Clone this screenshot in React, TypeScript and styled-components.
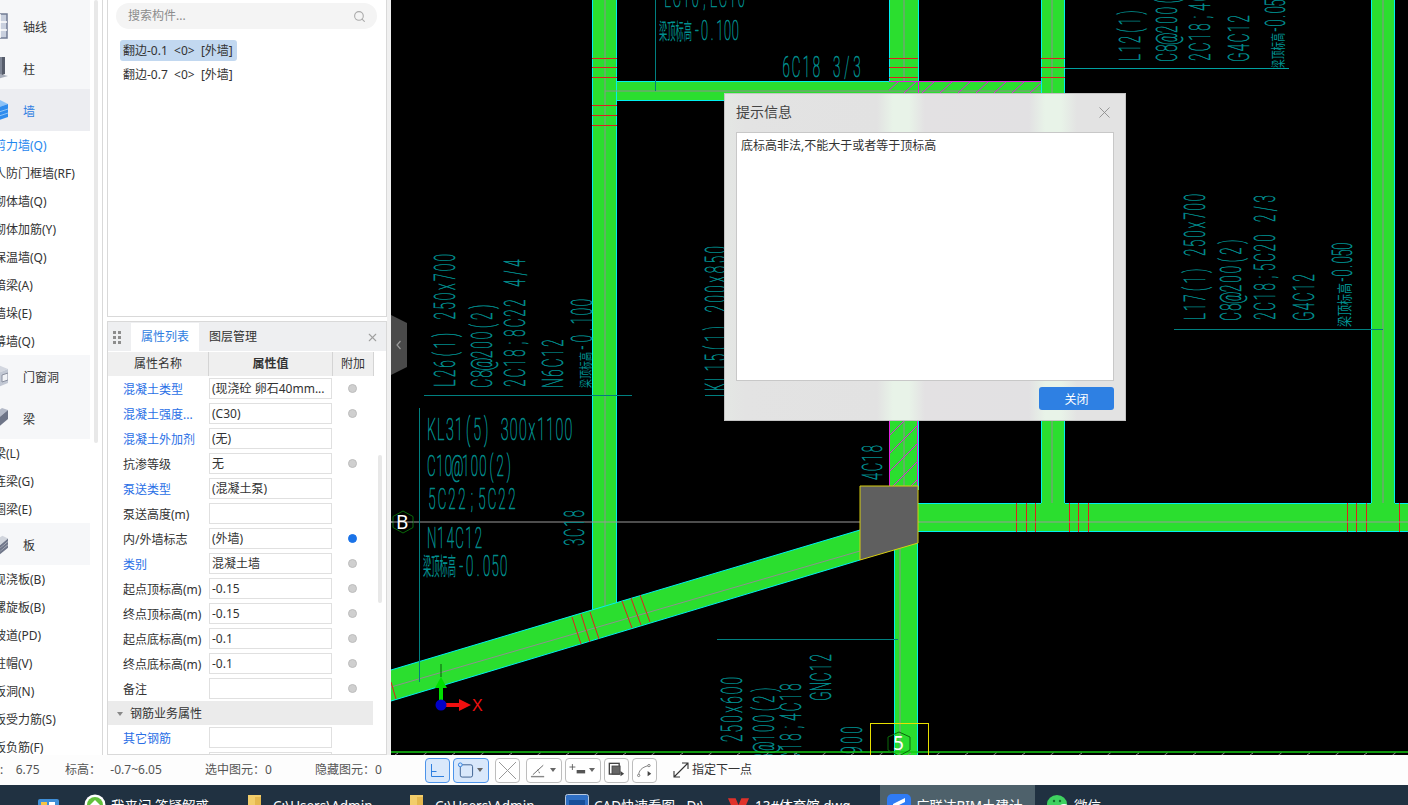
import React from "react";
import styled, { createGlobalStyle } from "styled-components";
import { Search, X } from "lucide-react";

const UI_FONT = `"Noto Sans", "Noto Sans CJK SC", sans-serif`;

const Global = createGlobalStyle`
  html, body { margin: 0; padding: 0; background: #fff; overflow: hidden; }
  * { box-sizing: border-box; }
`;

const Page = styled.div`
  width: 1408px; height: 805px; display: flex; flex-direction: column; overflow: hidden;
  font: 12px/1.4 ${UI_FONT}; color: #333;
`;
const Main = styled.div`display: flex; height: 755px; overflow: hidden;`;
const Side = styled.div`width: 391px; display: flex; background: #fff; flex: none;`;

/* ---------- left nav ---------- */
const Nav = styled.nav`width: 90px; flex: none; padding-top: 5px; overflow: hidden; background: linear-gradient(#f6f7f9 5px, #fff 5px);`;
const NavHead = styled.div<{ $active?: boolean }>`
  height: 42px; display: flex; align-items: center; gap: 15px; line-height: 20px;
  background: ${p => (p.$active ? "#ecedf1" : "#f6f7f9")};
  color: ${p => (p.$active ? "#2f7de1" : "#333")};
  & > span { padding-top: 3px; }
  & > svg { margin-left: -16px; flex: none; }
`;
const NavSub = styled.div<{ $active?: boolean }>`
  height: 28px; line-height: 30px; margin-left: -6px; white-space: nowrap;
  color: ${p => (p.$active ? "#1f86ee" : "#333")};
`;
const Gutter = styled.div`
  width: 13px; flex: none; padding-left: 4px; background: #fff; border-right: 1px solid #d9d9d9;
`;
const GutterThumb = styled.div`width: 4px; height: 443px; background: #e8e8e8; border-radius: 2px;`;

/* ---------- panels ---------- */
const PanelCol = styled.div`
  width: 280px; margin-left: 4px; flex: none; display: flex; flex-direction: column; gap: 4px;
`;
const ListPanel = styled.section`
  height: 317px; border: 1px solid #d9d9d9; border-top: 0; padding: 3px 9px 0 8px; background: #fff;
`;
const SearchBox = styled.div`
  height: 26px; border-radius: 13px; background: #f4f4f4; color: #8c8c8c; display: flex; align-items: center;
  justify-content: space-between; padding: 1px 11px 0 12px;
`;
const CompList = styled.div`display: flex; flex-direction: column; align-items: flex-start; margin: 11px 0 0 4px; gap: 3px;`;
const Comp = styled.div<{ $sel?: boolean }>`
  height: 21px; line-height: 21px; padding: 0 4px 0 3px; border-radius: 3px; white-space: pre;
  background: ${p => (p.$sel ? "#c2d8f0" : "transparent")};
`;
const PropPanel = styled.section`
  position: relative; flex: 1; border: 1px solid #d9d9d9; background: #fff;
  overflow: hidden; display: flex; flex-direction: column;
`;
const TabBar = styled.div`
  height: 29px; background: #eeeff1; display: flex; align-items: stretch; flex: none; padding: 1px 0 0 0;
`;
const Grip = styled.div`
  width: 23px; display: grid; grid-template-columns: 3px 3px; grid-auto-rows: 3px; gap: 2px 2px;
  align-content: center; padding-left: 5px;
  i { background: #8d8d8d; display: block; }
`;
const Tab = styled.div<{ $on?: boolean }>`
  width: ${p => (p.$on ? "68px" : "auto")}; padding: ${p => (p.$on ? "0" : "0 0 0 10px")};
  display: flex; align-items: center; justify-content: center;
  background: ${p => (p.$on ? "#fff" : "transparent")};
  color: ${p => (p.$on ? "#2f7de1" : "#333")};
`;
const TabClose = styled.div`margin-left: auto; width: 27px; display: flex; align-items: center; justify-content: center; color: #a0a0a0;`;
const THead = styled.div`
  display: grid; grid-template-columns: 101px 124px 41px; height: 24px; margin-top: 1px; width: 266px; flex: none;
`;
const Th = styled.div<{ $bold?: boolean }>`
  background: #efefef; border-right: 1px solid #d4d4d4; display: flex; align-items: center; justify-content: center;
  font-weight: ${p => (p.$bold ? 700 : 400)};
`;
const Row = styled.div`
  height: 25px; flex: none; display: grid; grid-template-columns: 101px 123px 41px; padding-top: 2px; width: 265px;
`;
const Label = styled.div<{ $link?: boolean }>`
  padding-left: 15px; line-height: 23px; white-space: nowrap; overflow: hidden;
  color: ${p => (p.$link ? "#2a6fe6" : "#333")};
`;
const Val = styled.div`
  height: 21px; border: 1px solid #e0e0e0; padding-left: 2px; line-height: 19px; white-space: nowrap; overflow: hidden;
`;
const Dot = styled.span<{ $on?: boolean }>`
  width: 9px; height: 9px; border-radius: 50%; margin: 6px 0 0 16px; display: block;
  background: ${p => (p.$on ? "#1a73e8" : "#cfcfcf")};
  border: 1px solid ${p => (p.$on ? "#1a73e8" : "#bdbdbd")};
`;
const Section = styled.div`
  height: 24px; width: 265px; flex: none; background: #ebebeb; display: flex; align-items: center; gap: 7px; padding: 2px 0 0 9px;
  &::before { content: ""; border: 3px solid transparent; border-top: 4px solid #888; border-bottom: 0; }
`;
const PanelScroll = styled.div`
  position: absolute; left: 270px; top: 133px; width: 4px; height: 148px; background: #e8e8e8; border-radius: 2px;
`;
const Strip = styled.div`width: 4px; flex: none; background: #f0f0f0;`;

/* ---------- canvas ---------- */
const Canvas = styled.div`position: relative; flex: 1; background: #000; overflow: hidden;`;
const CadSvg = styled.svg`display: block;`;
const CadText = styled.text`font-family: Roboto, sans-serif; font-weight: 100; fill: #009c9c; stroke: #008a8a; stroke-width: 0.7px;`;
const CadCjk = styled.text`font-family: "Noto Sans CJK SC", sans-serif; font-weight: 400; fill: #009090;`;
const GridLabel = styled.text`font-family: "Noto Sans", sans-serif; font-size: 19px; fill: #fff;`;
const AxisLabel = styled.text`font-family: "Liberation Sans", sans-serif; font-size: 16px;`;

const Handle = styled.button`
  position: absolute; left: 0; top: 315px; width: 16px; height: 60px; padding: 0; border: 0; background: #4a4a4a;
  clip-path: polygon(0 0, 100% 8px, 100% 52px, 0 100%); color: #9a9a9a; display: flex; align-items: center; justify-content: center;
`;
const Dialog = styled.div`
  position: absolute; left: 333px; top: 93px; width: 402px; height: 328px; border: 1px solid #c4c4c4;
  background: linear-gradient(90deg, #e4e7e4 0, #e3e3e3 5%, #e2e2e2 38%, #e8f3e8 42%, #e8f3e8 46%, #e3e1e3 50%, #e2e1e3 76%, #e8f3e8 80%, #e8f3e8 84%, #e3e3e3 88%, #e3e3e3 100%);
  display: flex; flex-direction: column; padding: 0 11px;
`;
const DialogHead = styled.div`
  height: 38px; flex: none; display: flex; align-items: center; justify-content: space-between;
  font-size: 14px; color: #444; padding: 0 0 2px 0;
  svg { color: #8a8a8a; }
`;
const DialogBody = styled.div`
  height: 249px; flex: none; background: #fff; border: 1px solid #c8c8c8; padding: 5px 4px; color: #333;
`;
const DialogFoot = styled.div`flex: 1; display: flex; justify-content: flex-end; padding-top: 6px; align-items: flex-start;`;
const PrimaryBtn = styled.button`
  width: 75px; height: 23px; border: 0; border-radius: 3px; background: #2e80e3; color: #fff; font: 12px ${UI_FONT}; padding: 0;
`;

/* ---------- status bar ---------- */
const Status = styled.div`height: 30px; flex: none; background: #fdfdfd; display: flex; align-items: center; color: #555;`;
const StatusItem = styled.span<{ $w: number }>`width: ${p => p.$w}px; flex: none; white-space: pre;`;
const Tools = styled.div`display: flex; align-items: center; height: 25px;`;
const ToolBtn = styled.div<{ $w: number; $on?: boolean; $gap: number }>`
  width: ${p => p.$w}px; height: 25px; margin-right: ${p => p.$gap}px; border-radius: 4px; flex: none;
  border: 1px solid ${p => (p.$on ? "#4d94ea" : "#bdbdbd")};
  background: ${p => (p.$on ? "#d9e8fb" : "#fff")};
  display: flex; align-items: center; padding: 0 3px; gap: 3px; color: #555;
`;
const Caret = styled.span`
  border: 3px solid transparent; border-top: 4px solid #666; border-bottom: 0; margin-left: auto; margin-right: 2px; flex: none;
`;
const Hint = styled.div`display: flex; align-items: center; gap: 3px; margin-left: 16px; color: #333;`;

/* ---------- taskbar ---------- */
const Taskbar = styled.div`height: 20px; flex: none; background: #203141; display: flex; overflow: hidden; color: #fff; font-size: 13.5px;`;
const TaskItem = styled.div<{ $w: number; $on?: boolean; $pad?: number }>`
  width: ${p => p.$w}px; flex: none; height: 36px; display: flex; align-items: flex-start; gap: 5px; white-space: nowrap; overflow: hidden;
  background: ${p => (p.$on ? "#4e616b" : "transparent")};
  padding-left: ${p => p.$pad ?? 0}px;
  span { line-height: 18px; margin-top: 12px; }
  svg { flex: none; margin-top: 9px; }
`;

/* ---------- data ---------- */
const props: { l: string; v: string; link?: boolean; dot?: "on" | "off" }[] = [
  { l: "混凝土类型", v: "(现浇砼 卵石40mm...", link: true, dot: "off" },
  { l: "混凝土强度...", v: "(C30)", link: true, dot: "off" },
  { l: "混凝土外加剂", v: "(无)", link: true },
  { l: "抗渗等级", v: "无", dot: "off" },
  { l: "泵送类型", v: "(混凝土泵)", link: true },
  { l: "泵送高度(m)", v: "" },
  { l: "内/外墙标志", v: "(外墙)", dot: "on" },
  { l: "类别", v: "混凝土墙", link: true, dot: "off" },
  { l: "起点顶标高(m)", v: "-0.15", dot: "off" },
  { l: "终点顶标高(m)", v: "-0.15", dot: "off" },
  { l: "起点底标高(m)", v: "-0.1", dot: "off" },
  { l: "终点底标高(m)", v: "-0.1", dot: "off" },
  { l: "备注", v: "", dot: "off" },
];

type T = { t: string; x: number; y: number; len: number; size: number; v?: boolean };
const notes: T[] = [
  { t: "KL31(5) 300x1100", x: 427, y: 440, len: 146, size: 31 },
  { t: "C10@100(2)", x: 427, y: 476, len: 86, size: 29 },
  { t: "5C22;5C22", x: 427, y: 509, len: 90, size: 29 },
  { t: "N14C12", x: 427, y: 548, len: 56, size: 29 },
  { t: "-0.050", x: 457, y: 576, len: 51, size: 29 },
  { t: "3C18", x: 584, y: 547, len: 38, size: 28, v: true },
  { t: "4C18", x: 882, y: 481, len: 37, size: 28, v: true },
  { t: "-0.100", x: 693, y: 40, len: 46, size: 28 },
  { t: "LC10;EC10", x: 663, y: 7, len: 83, size: 28 },
  { t: "6C18 3/3", x: 781, y: 77, len: 81, size: 29 },
  { t: "L26(1) 250x700", x: 455, y: 388, len: 135, size: 30, v: true },
  { t: "C8@200(2)", x: 492, y: 388, len: 86, size: 30, v: true },
  { t: "2C18;8C22 4/4", x: 525, y: 388, len: 130, size: 29, v: true },
  { t: "N6C12", x: 563, y: 388, len: 50, size: 29, v: true },
  { t: "-0.100", x: 592, y: 352, len: 54, size: 29, v: true },
  { t: "KL15(1) 200x850", x: 726, y: 392, len: 147, size: 29, v: true },
  { t: "L17(1) 250x700", x: 1205, y: 321, len: 128, size: 29, v: true },
  { t: "C8@200(2)", x: 1241, y: 321, len: 84, size: 29, v: true },
  { t: "2C18;5C20 2/3", x: 1275, y: 321, len: 127, size: 29, v: true },
  { t: "G4C12", x: 1314, y: 321, len: 48, size: 29, v: true },
  { t: "-0.050", x: 1352, y: 283, len: 40, size: 28, v: true },
  { t: "L12(1) 250", x: 1140, y: 62, len: 90, size: 29, v: true },
  { t: "C8@200(2)", x: 1177, y: 62, len: 84, size: 29, v: true },
  { t: "2C18;4C20", x: 1210, y: 62, len: 90, size: 29, v: true },
  { t: "G4C12", x: 1249, y: 62, len: 48, size: 29, v: true },
  { t: "-0.050", x: 1285, y: 33, len: 40, size: 28, v: true },
  { t: "250x600", x: 742, y: 743, len: 67, size: 30, v: true },
  { t: "8@100(2)", x: 774, y: 762, len: 77, size: 29, v: true },
  { t: "C18;4C18", x: 801, y: 762, len: 80, size: 29, v: true },
  { t: "GNC12", x: 831, y: 701, len: 48, size: 29, v: true },
  { t: "900", x: 862, y: 755, len: 30, size: 29, v: true },
];
const cjkNotes = [
  { x: 423, y: 575, len: 33, size: 14 },
  { x: 659, y: 39, len: 33, size: 13 },
];
const cjkVert = [
  { x: 590, y: 388, len: 36, size: 13 },
  { x: 1350, y: 327, len: 44, size: 15 },
  { x: 1283, y: 68, len: 35, size: 14 },
];

const teal = "#007f7f";
const cyan = "#00f0f0";
const green = "#2bde2f";

/* CAD lettering is fixed pitch: each glyph is centred on its own slot, the run squeezed sideways. */
const SQUEEZE = 0.46;
const Note = ({ t, x, y, len, size, v }: T) => {
  const pitch = len / t.length / SQUEEZE;
  const slots = Array.from(t, (_, i) => ((i + 0.5) * pitch).toFixed(1)).join(" ");
  return (
    <CadText x={slots} y={0} fontSize={size} textAnchor="middle"
      transform={`translate(${x} ${y}) ${v ? "rotate(-90)" : ""} scale(${SQUEEZE} 1)`}>{t}</CadText>
  );
};

const VBeam = ({ x, w, y1, y2, c }: { x: number; w: number; y1: number; y2: number; c: number }) => (
  <g>
    <rect x={x} y={y1} width={w} height={y2 - y1} fill={green} />
    <line x1={x + 0.5} x2={x + 0.5} y1={y1} y2={y2} stroke={cyan} />
    <line x1={x + w - 0.5} x2={x + w - 0.5} y1={y1} y2={y2} stroke={cyan} />
    <line x1={c} x2={c} y1={y1} y2={y2} stroke="#8f8f8f" />
  </g>
);

const redH = [[592, 617, 58], [592, 617, 67], [592, 617, 77], [592, 617, 105], [592, 617, 115], [592, 617, 125],
  [889, 918, 58], [889, 918, 67], [889, 918, 77], [1041, 1065, 58], [1041, 1065, 67], [1041, 1065, 77]];
const redV = [1016, 1026, 1035, 1069, 1078, 1088, 1347, 1356, 1366, 1399];
const redDiag = [[572, 617, 581, 644], [581, 614, 590, 642], [590, 612, 599, 639], [622, 601, 632, 628], [631, 598, 641, 625], [640, 595, 650, 622], [391, 682, 396, 699]];

const CadDrawing = () => (
  <CadSvg width={1017} height={755} viewBox="391 0 1017 755">
    <defs>
      <clipPath id="hatchA"><rect x={889} y={82} width={152} height={12} /></clipPath>
      <clipPath id="hatchB"><rect x={889} y={418} width={29} height={68} /></clipPath>
    </defs>
    {/* beams */}
    <VBeam x={592} w={25} y1={0} y2={612} c={605} />
    <VBeam x={889} w={30} y1={0} y2={490} c={904} />
    <VBeam x={894} w={24} y1={540} y2={755} c={900} />
    <VBeam x={1041} w={24} y1={0} y2={504} c={1052} />
    <VBeam x={1371} w={24} y1={0} y2={504} c={1383} />
    <rect x={617} y={82} width={424} height={19} fill={green} />
    <line x1={617} x2={1041} y1={81.5} y2={81.5} stroke={cyan} />
    <line x1={617} x2={889} y1={100.5} y2={100.5} stroke={cyan} />
    <line x1={605} x2={1041} y1={91} y2={91} stroke="#8f8f8f" />
    <rect x={917} y={503} width={491} height={29} fill={green} />
    <line x1={918} x2={1041} y1={503.5} y2={503.5} stroke={cyan} />
    <line x1={1065} x2={1371} y1={503.5} y2={503.5} stroke={cyan} />
    <line x1={1395} x2={1408} y1={503.5} y2={503.5} stroke={cyan} />
    <line x1={918} x2={1408} y1={531.5} y2={531.5} stroke={cyan} />
    <polygon points="391,670 860,530 860,560 391,701" fill={green} />
    <line x1={391} y1={670} x2={860} y2={530} stroke={cyan} />
    <line x1={391} y1={701} x2={860} y2={560} stroke={cyan} />
    <line x1={391} y1={687} x2={860} y2={551} stroke="#8f8f8f" />

    {/* ties */}
    {redH.map(([a, b, y], i) => <line key={i} x1={a} x2={b} y1={y + 0.5} y2={y + 0.5} stroke="#e0201c" />)}
    {redV.map((x, i) => <line key={i} x1={x + 0.5} x2={x + 0.5} y1={503} y2={532} stroke="#e0201c" />)}
    {redDiag.map(([a, b, c, d], i) => <line key={i} x1={a} y1={b} x2={c} y2={d} stroke="#e0201c" />)}

    {/* hatching */}
    <g clipPath="url(#hatchA)" stroke="#e020e0">
      {[0, 1, 2, 3, 4, 5, 6, 7, 8].map(i => <line key={i} x1={885 + i * 18} y1={94} x2={900 + i * 18} y2={80} />)}
    </g>
    <line x1={889} x2={1041} y1={81.5} y2={81.5} stroke="#e020e0" />
    <line x1={918.5} x2={918.5} y1={82} y2={93} stroke="#e020e0" />
    <g clipPath="url(#hatchB)" stroke="#e020e0">
      {[0, 1, 2, 3, 4].map(i => <line key={i} x1={885} y1={440 + i * 18} x2={925} y2={400 + i * 18} />)}
      <line x1={889.5} x2={889.5} y1={418} y2={486} />
      <line x1={917.5} x2={917.5} y1={418} y2={486} />
    </g>

    {/* gridline B */}
    <line x1={391} x2={1408} y1={522} y2={522} stroke="#9a9a9a" />
    <polygon points="403,511 413,516.5 413,527.5 403,533 393,527.5 393,516.5" fill="#000" stroke="#0a6a0a" />
    <line x1={391} x2={413} y1={522} y2={522} stroke="#9a9a9a" />
    <GridLabel x={396} y={529}>B</GridLabel>

    {/* column block */}
    <polygon points="860,486 918,486 918,543 860,560" fill="#5f5f5f" stroke="#d8cf10" />

    {/* leaders */}
    <g stroke={teal}>
      <line x1={419.5} x2={419.5} y1={408} y2={682} />
      <line x1={655.5} x2={655.5} y1={0} y2={91} />
      <line x1={424} x2={632} y1={395.5} y2={395.5} />
      <line x1={705} x2={724} y1={395.5} y2={395.5} />
      <line x1={1174} x2={1383} y1={329.5} y2={329.5} />
      <line x1={1065} x2={1289} y1={68.5} y2={68.5} stroke="#00a0a0" />
      <line x1={717} x2={898} y1={639.5} y2={639.5} />
    </g>
    {notes.map((n, i) => <Note key={i} {...n} />)}
    {cjkNotes.map((n, i) => (
      <CadCjk key={i} x={n.x} y={n.y} fontSize={n.size} textLength={n.len} lengthAdjust="spacingAndGlyphs"
        transform={`translate(${n.x} ${n.y}) scale(1 1.7) translate(${-n.x} ${-n.y})`}>梁顶标高</CadCjk>
    ))}
    {cjkVert.map((n, i) => (
      <CadCjk key={i} x={n.x} y={n.y} fontSize={n.size} textLength={n.len} lengthAdjust="spacingAndGlyphs"
        transform={`rotate(-90 ${n.x} ${n.y})`}>梁顶标高</CadCjk>
    ))}

    {/* bottom axis */}
    <line x1={391} x2={1408} y1={752} y2={752} stroke="#14c814" strokeWidth={1.6} />
    {Array.from({ length: 36 }, (_, i) => (
      <line key={i} x1={395 + i * 28.5} y1={755} x2={398 + i * 28.5} y2={753} stroke="#888" />
    ))}
    <rect x={870.5} y={723.5} width={58} height={40} fill="none" stroke="#e8e000" />
    <polygon points="899,732 910,737 910,750 899,756 888,750 888,737" fill="none" stroke="#0a6a0a" />
    <GridLabel x={893} y={750}>5</GridLabel>

    {/* UCS */}
    <line x1={441} x2={441} y1={705} y2={686} stroke="#00e000" strokeWidth={4} />
    <polygon points="441,677 435,688 447,688" fill="#00e000" />
    <line x1={441} x2={441} y1={664} y2={677} stroke="#0a5a0a" />
    <line x1={441} x2={460} y1={705} y2={705} stroke="#f01010" strokeWidth={4} />
    <polygon points="471,705 459,699 459,711" fill="#f01010" />
    <circle cx={441} cy={705} r={5.5} fill="#0000c8" />
    <AxisLabel x={472} y={711} fill="#f01010">X</AxisLabel>
  </CadSvg>
);

/* ---------- icons ---------- */
const IconGrid = () => (
  <svg width="24" height="26" viewBox="0 0 24 26">
    <rect x="1" y="1" width="22" height="24" fill="#c9d0de" stroke="#727c94" strokeWidth="1.5" />
    <path d="M16 1v24M1 9h22M1 17h22" stroke="#fff" strokeWidth="1.5" />
  </svg>
);
const IconColumn = () => (
  <svg width="24" height="26" viewBox="0 0 24 26">
    <path d="M12 2h6v18l-6 2z" fill="#7d8494" />
    <path d="M0 22l16-3 8 2-14 4z" fill="#a8aebb" />
    <path d="M18 2h3v17l-3 1z" fill="#565c6b" />
  </svg>
);
const IconWall = () => (
  <svg width="24" height="26" viewBox="0 0 24 26">
    <path d="M2 8l14-5 8 4-14 5z" fill="#8cc2f7" />
    <path d="M10 12l14-5v13l-14 5z" fill="#2f8cee" />
    <path d="M12 16l12-4M12 20l12-4" stroke="#8cc2f7" />
    <path d="M2 8l8 4v13l-8-4z" fill="#5fa8f2" />
  </svg>
);
const IconOpening = () => (
  <svg width="24" height="26" viewBox="0 0 24 26">
    <path d="M4 6l10-4 10 4-10 4z" fill="#d3d7e0" />
    <path d="M14 10l10-4v14l-10 4z" fill="#c2c8d4" />
    <path d="M18 12l6-2v7l-6 2z" fill="#f0f2f6" stroke="#8a90a0" />
  </svg>
);
const IconBeam = () => (
  <svg width="24" height="26" viewBox="0 0 24 26">
    <path d="M4 13L18 3l6 2-12 10z" fill="#b4bac8" />
    <path d="M12 15L24 5v9L12 24z" fill="#6e7588" />
  </svg>
);
const IconSlab = () => (
  <svg width="24" height="26" viewBox="0 0 26 26">
    <path d="M4 14L20 4l6 3-12 10z" fill="#d1d5dd" />
    <path d="M14 17L26 7v3L14 20zM14 20.5l12-10v3L14 23.5zM14 24l12-10v3L14 27z" fill="#70778a" />
  </svg>
);
const ToolCorner = () => (
  <svg width="17" height="17" viewBox="0 0 17 17" fill="none" stroke="#2e7fe0"><path d="M2.5 2v12.5H15" /><path d="M2.5 9.5h5" /></svg>
);
const ToolRect = () => (
  <svg width="18" height="18" viewBox="0 0 18 18" fill="none" stroke="#3a5f8f"><rect x="3.5" y="3.5" width="13" height="13" rx="2" /><circle cx="3.5" cy="3.5" r="2" fill="#d9e8fb" stroke="#2e7fe0" /></svg>
);
const ToolCross = () => (
  <svg width="17" height="17" viewBox="0 0 17 17" stroke="#999"><path d="M0 0l17 17M17 0L0 17" /></svg>
);
const ToolAngle = () => (
  <svg width="18" height="18" viewBox="0 0 18 18" fill="none" stroke="#666"><path d="M3 14L14 4" /><path d="M1 16h14" stroke="#888" strokeWidth="1.5" /><path d="M8 9c1.5 1 2 2.5 2 4" strokeDasharray="1.5 1" /></svg>
);
const ToolPlus = () => (
  <svg width="20" height="18" viewBox="0 0 20 18" fill="#555"><path d="M4 2v7M.5 5.500h7" stroke="#555" fill="none" /><rect x="9" y="9" width="10" height="4" /></svg>
);
const ToolCapture = () => (
  <svg width="19" height="19" viewBox="0 0 19 19" fill="none" stroke="#444"><rect x="1.500" y="1.500" width="11" height="12" strokeWidth="1.5" /><rect x="4.500" y="4.500" width="9" height="9" fill="#666" /><path d="M14 10l4 3-4 3z" fill="#444" stroke="none" /></svg>
);
const ToolArc = () => (
  <svg width="19" height="19" viewBox="0 0 19 19" fill="none" stroke="#777"><path d="M3 15c0-5 3-9 11-11" /><circle cx="3" cy="15" r="1.300" fill="#fff" /><circle cx="14.500" cy="4" r="1.300" fill="#fff" /><path d="M13 10l4 3-4 3z" fill="#444" stroke="none" /></svg>
);
const ToolExpand = () => (
  <svg width="16" height="16" viewBox="0 0 16 16" fill="none" stroke="#333" strokeWidth="1.100"><path d="M1 15L15 1M9 1h6v6M1 9v6h6" /></svg>
);

const Folder = () => (
  <svg width="20" height="20" viewBox="0 0 20 20"><path d="M0 1h13v18H0z" fill="#f2cd6b" /><path d="M7 3h6v16H7z" fill="#e6b84f" /></svg>
);

export default function App() {
  return (
    <Page>
      <Global />
      <Main>
        <Side>
          <Nav>
            <NavHead><IconGrid /><span>轴线</span></NavHead>
            <NavHead><IconColumn /><span>柱</span></NavHead>
            <NavHead $active><IconWall /><span>墙</span></NavHead>
            <NavSub $active>剪力墙(Q)</NavSub>
            {["人防门框墙(RF)", "砌体墙(Q)", "砌体加筋(Y)", "保温墙(Q)", "暗梁(A)", "墙垛(E)", "幕墙(Q)"].map(t => <NavSub key={t}>{t}</NavSub>)}
            <NavHead><IconOpening /><span>门窗洞</span></NavHead>
            <NavHead><IconBeam /><span>梁</span></NavHead>
            {["梁(L)", "连梁(G)", "圈梁(E)"].map(t => <NavSub key={t}>{t}</NavSub>)}
            <NavHead><IconSlab /><span>板</span></NavHead>
            {["现浇板(B)", "螺旋板(B)", "坡道(PD)", "柱帽(V)", "板洞(N)", "板受力筋(S)", "板负筋(F)"].map(t => <NavSub key={t}>{t}</NavSub>)}
          </Nav>
          <Gutter><GutterThumb /></Gutter>
          <PanelCol>
            <ListPanel>
              <SearchBox>搜索构件...<Search size={13} color="#aaa" /></SearchBox>
              <CompList>
                <Comp $sel>{"翻边-0.1  <0>  [外墙]"}</Comp>
                <Comp>{"翻边-0.7  <0>  [外墙]"}</Comp>
              </CompList>
            </ListPanel>
            <PropPanel>
              <TabBar>
                <Grip>{[0, 1, 2, 3, 4, 5].map(i => <i key={i} />)}</Grip>
                <Tab $on>属性列表</Tab>
                <Tab>图层管理</Tab>
                <TabClose><X size={13} /></TabClose>
              </TabBar>
              <THead><Th>属性名称</Th><Th $bold>属性值</Th><Th>附加</Th></THead>
              {props.map(p => (
                <Row key={p.l}>
                  <Label $link={p.link}>{p.l}</Label>
                  <Val>{p.v}</Val>
                  <div>{p.dot && <Dot $on={p.dot === "on"} />}</div>
                </Row>
              ))}
              <Section>钢筋业务属性</Section>
              <Row><Label $link>其它钢筋</Label><Val /><div /></Row>
              <Row><Label /><Val /><div /></Row>
              <PanelScroll />
            </PropPanel>
          </PanelCol>
          <Strip />
        </Side>
        <Canvas>
          <CadDrawing />
          <Handle>
            <svg width="8" height="10" viewBox="0 0 8 10" fill="none" stroke="currentColor" strokeWidth="1.200"><path d="M5.500 1L2 5l3.500 4" /></svg>
          </Handle>
          <Dialog>
            <DialogHead>提示信息<X size={19} strokeWidth={1.100} /></DialogHead>
            <DialogBody>底标高非法,不能大于或者等于顶标高</DialogBody>
            <DialogFoot><PrimaryBtn>关闭</PrimaryBtn></DialogFoot>
          </Dialog>
        </Canvas>
      </Main>
      <Status>
        <StatusItem $w={65}>{":    6.75"}</StatusItem>
        <StatusItem $w={140}>{"标高：   -0.7~6.05"}</StatusItem>
        <StatusItem $w={110}>选中图元：0</StatusItem>
        <StatusItem $w={110}>隐藏图元：0</StatusItem>
        <Tools>
          <ToolBtn $w={25} $gap={3} $on><ToolCorner /></ToolBtn>
          <ToolBtn $w={36} $gap={6} $on><ToolRect /><Caret /></ToolBtn>
          <ToolBtn $w={25} $gap={6}><ToolCross /></ToolBtn>
          <ToolBtn $w={36} $gap={3}><ToolAngle /><Caret /></ToolBtn>
          <ToolBtn $w={36} $gap={3}><ToolPlus /><Caret /></ToolBtn>
          <ToolBtn $w={25} $gap={3}><ToolCapture /></ToolBtn>
          <ToolBtn $w={25} $gap={0}><ToolArc /></ToolBtn>
        </Tools>
        <Hint><ToolExpand />指定下一点</Hint>
      </Status>
      <Taskbar>
        <TaskItem $w={38} />
        <TaskItem $w={46}>
          <svg width="21" height="20" viewBox="0 0 21 20"><rect y="5" width="21" height="15" rx="2" fill="#3f8fd8" /><rect x="3" y="8" width="6" height="5" fill="#f6c445" /><rect x="11" y="8" width="6" height="5" fill="#fff" /></svg>
        </TaskItem>
        <TaskItem $w={164}>
          <svg width="22" height="22" viewBox="0 0 22 22"><circle cx="11" cy="11" r="10.500" fill="#fff" /><circle cx="11" cy="11" r="8" fill="#63c13c" /><path d="M6 11l5-5 5 5z" fill="#fff" /></svg>
          <span>我来问 答疑解惑</span>
        </TaskItem>
        <TaskItem $w={162}><Folder /><span>C:\Users\Admin</span></TaskItem>
        <TaskItem $w={155} ><Folder /><span>C:\Users\Admin</span></TaskItem>
        <TaskItem $w={162}>
          <svg width="24" height="24" viewBox="0 0 24 24"><rect x=".5" y=".5" width="23" height="23" rx="2" fill="#2f6fc4" stroke="#b8c8de" /><rect x="4" y="6" width="16" height="12" fill="#174f99" /></svg>
          <span>CAD快速看图 - D:\</span>
        </TaskItem>
        <TaskItem $w={153}>
          <svg width="23" height="20" viewBox="0 0 24 20"><path d="M1 4h8l3 7 3-7h8l-7 16H8z" fill="#e0312a" /></svg>
          <span>13#体育馆.dwg</span>
        </TaskItem>
        <TaskItem $w={155} $on $pad={7}>
          <svg width="24" height="24" viewBox="0 0 24 24"><rect width="24" height="24" rx="5" fill="#2f7bf5" /><path d="M6 10l12-6v4L6 14z" fill="#fff" /></svg>
          <span>广联达BIM土建计</span>
        </TaskItem>
        <TaskItem $w={80} $pad={12}>
          <svg width="22" height="20" viewBox="0 0 22 20"><ellipse cx="10" cy="10" rx="10" ry="9" fill="#3fd160" /><circle cx="7" cy="7" r="1.200" fill="#176f30" /><circle cx="13" cy="7" r="1.200" fill="#176f30" /><ellipse cx="17" cy="15" rx="6" ry="5" fill="#fff" /></svg>
          <span>微信</span>
        </TaskItem>
      </Taskbar>
    </Page>
  );
}
